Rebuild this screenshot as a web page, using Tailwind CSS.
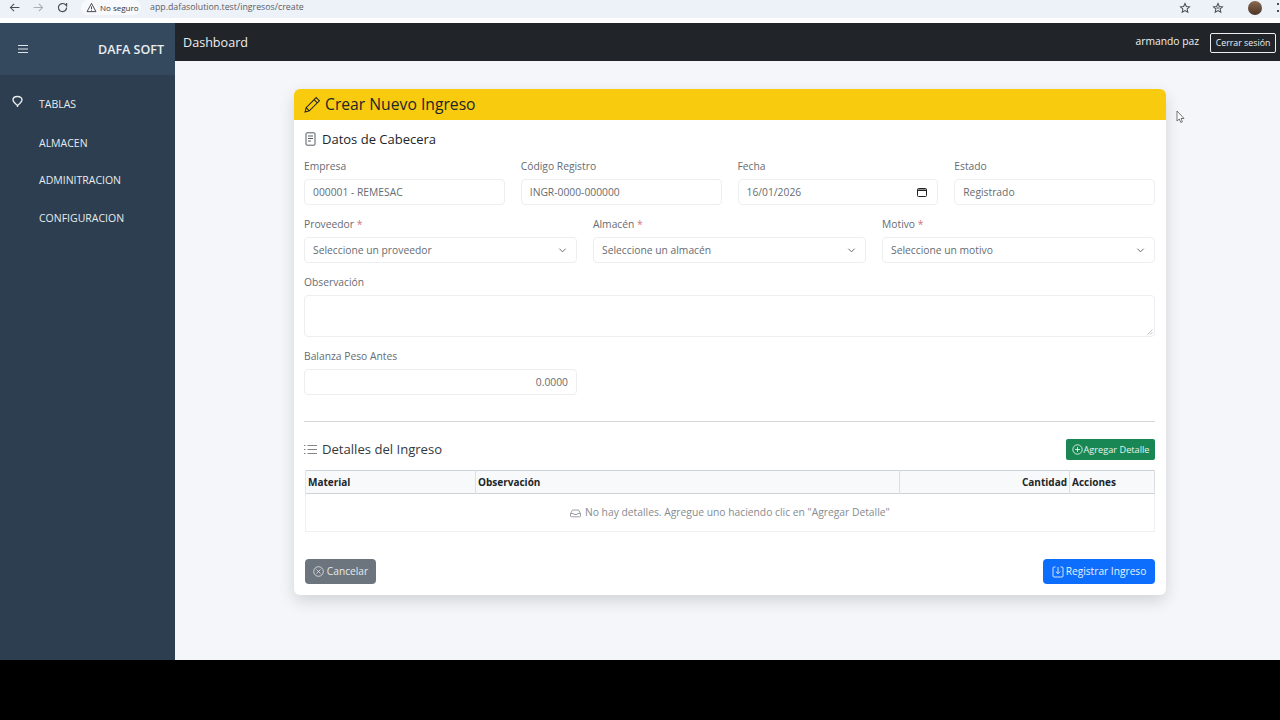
<!DOCTYPE html>
<html lang="es">
<head>
<meta charset="UTF-8">
<title>Crear Nuevo Ingreso</title>
<script src="https://cdn.jsdelivr.net/npm/@tailwindcss/browser@4"></script>
</head>
<body class="w-[1280px] h-[720px] overflow-hidden bg-black font-['Open_Sans','Noto_Sans',sans-serif]">

<!-- Browser bar -->
<div class="h-[23px] bg-white flex">
  <div class="flex-1 h-[18px] bg-[#edf1f8] flex items-center pl-[8px] pb-[3px]">
    <svg class="w-[13px] h-[13px] text-[#4a4d52]" viewBox="0 0 16 16" fill="none" stroke="currentColor" stroke-width="1.3"><path d="M14 8H3M7.5 3.5 3 8l4.500 4.500"/></svg>
    <svg class="w-[13px] h-[13px] ml-[11px] text-[#a9acb1]" viewBox="0 0 16 16" fill="none" stroke="currentColor" stroke-width="1.3"><path d="M2 8h11M8.500 3.500 13 8l-4.500 4.500"/></svg>
    <svg class="w-[13px] h-[13px] ml-[11px] text-[#4a4d52]" viewBox="0 0 16 16" fill="none" stroke="currentColor" stroke-width="1.5"><path d="M13 8a5 5 0 1 1-1.500-3.500L13 6V2.500"/></svg>
    <div class="ml-[12px] h-[15px] w-[60px] shrink-0 rounded-full bg-[#f7f9fd] flex items-center pl-[5px] text-[8px] text-[#33363a] whitespace-nowrap">
      <svg class="w-[11px] h-[11px] mr-[3px] shrink-0" viewBox="0 0 16 16" fill="none" stroke="currentColor" stroke-width="1.3"><path d="M8 2 1.500 14h13zM8 6.500v4M8 11.500v1"/></svg>No seguro
    </div>
    <span class="ml-[9px] text-[8.800px] text-[#5b5f65] whitespace-nowrap">app.dafasolution.test/ingresos/create</span>
    <div class="ml-auto flex items-center">
      <svg class="w-[12px] h-[12px] text-[#4a4d52]" viewBox="0 0 16 16" fill="none" stroke="currentColor" stroke-width="1.4"><path d="m8 2 1.800 3.900 4.200.5-3.100 2.900.8 4.200L8 11.400l-3.700 2.100.8-4.200L2 6.400l4.200-.5z"/></svg>
      <span class="w-[21px]"></span>
      <svg class="w-[12px] h-[12px] text-[#4a4d52]" viewBox="0 0 16 16" fill="none" stroke="currentColor" stroke-width="1.4"><path d="m8 2 1.800 3.900 4.200.5-3.100 2.900.8 4.200L8 11.400l-3.700 2.100.8-4.200L2 6.400l4.200-.5z"/><path d="M6 8h4"/></svg>
      <span class="w-[24px]"></span>
      <span class="w-[14px] h-[14px] rounded-full bg-gradient-to-b from-[#8a6a50] to-[#4c3426]"></span>
      <span class="w-[15px]"></span>
      <span class="w-[2px] h-[9px] border-y-2 border-[#4a4d52] mr-[1px]"></span>
    </div>
  </div>
</div>

<div class="h-[637px] flex">
  <!-- Sidebar -->
  <aside class="w-[175px] shrink-0 bg-[#2c3e50] text-white">
    <div class="h-[52px] bg-[#34495e] flex items-center justify-between pl-[18px] pr-[11px]">
      <svg class="w-[10px] h-[10px] text-[#dfe4e8]" viewBox="0 0 10 10" fill="none" stroke="currentColor" stroke-width="1.200"><path d="M0 1.500h10M0 5h10M0 8.500h10"/></svg>
      <span class="text-[12.500px] font-semibold text-[#e9edf0] leading-none mt-[3px]">DAFA SOFT</span>
    </div>
    <nav class="text-[10.500px] text-[#e8ecef]">
      <div class="h-[20px] mt-[19px] pt-[1px] flex items-center pl-[11px]">
        <svg class="w-[13px] h-[15px] mr-[15px] -mt-[4px]" viewBox="0 0 13 15" fill="none" stroke="currentColor" stroke-width="1.400"><path d="M6.500 10.500C4 8.500 2 7 2 4.800 2 3 3.500 1.500 6.500 1.500S11 3 11 4.800c0 2.200-2 3.700-4.500 5.700zM6.500 10.500V12"/></svg>
        <span>TABLAS</span>
      </div>
      <div class="h-[20px] mt-[19px] pt-[1px] flex items-center pl-[39px]">ALMACEN</div>
      <div class="h-[20px] mt-[17.500px] pt-[1px] flex items-center pl-[39px]">ADMINITRACION</div>
      <div class="h-[20px] mt-[17.500px] pt-[1px] flex items-center pl-[39px]">CONFIGURACION</div>
    </nav>
  </aside>

  <!-- Main -->
  <div class="flex-1 bg-[#f4f6f9] flex flex-col min-w-0">
    <header class="h-[38px] bg-[#212529] flex items-center pl-[8px] pr-[4px] text-white">
      <span class="text-[12.600px] text-[#eceef0] mt-[2px]">Dashboard</span>
      <span class="ml-auto text-[10.300px] text-[#f0f1f2]">armando paz</span>
      <span class="ml-[11px] h-[20px] w-[66px] mt-[2px] pt-[1px] border border-[#eceef0] rounded-[2px] flex items-center justify-center text-[8.800px] text-[#eceef0]">Cerrar sesión</span>
    </header>

    <div class="relative flex-1 pt-[28px] pl-[119px]">
      <svg class="absolute left-[1001px] top-[49px] w-[9px] h-[14px]" viewBox="0 0 9 14" fill="#fff" stroke="#555" stroke-width="0.800"><path d="M1 1v10l2.300-2 1.500 3.500 1.600-.7L5 8.500h3z"/></svg>
      <!-- Card -->
      <section class="w-[872px] h-[506px] bg-white rounded-[6px] shadow-[0_6px_16px_rgba(0,0,0,0.14)] overflow-hidden">
        <div class="h-[31px] bg-[#f8cb0e] flex items-center pl-[10px] text-[#212529]">
          <svg class="w-[17px] h-[17px] mr-[4px]" viewBox="0 0 16 16" fill="none" stroke="currentColor" stroke-width="1"><path d="M11.500 1.500 14.500 4.500 5 14l-4 1 1-4zM9.500 3.500l3 3M2 11l3 3"/></svg>
          <h1 class="text-[15.700px] font-medium leading-none">Crear Nuevo Ingreso</h1>
        </div>

        <div class="pl-[10px] pr-[11px]">
          <div class="h-[38px] flex items-center text-[#212529]">
            <svg class="w-[13px] h-[14px] mr-[5px] -mt-[1px] text-[#444a50]" viewBox="0 0 13 14" fill="none" stroke="currentColor" stroke-width="0.900"><rect x="2" y="0.800" width="9" height="12.400" rx="1"/><path d="M4 4h5M4 6.500h5M4 9h3"/></svg>
            <h2 class="text-[13px] font-medium leading-none">Datos de Cabecera</h2>
          </div>

          <!-- Row 1 -->
          <div class="grid grid-cols-4 gap-x-[16px] text-[10.300px] text-[#666c72]">
            <div>
              <label class="block h-[21px] leading-[16px]">Empresa</label>
              <div class="h-[26px] border border-[#eceef0] rounded-[4px] flex items-center pl-[8px] pt-[1px]">000001 - REMESAC</div>
            </div>
            <div>
              <label class="block h-[21px] leading-[16px]">Código Registro</label>
              <div class="h-[26px] border border-[#eceef0] rounded-[4px] flex items-center pl-[8px] pt-[1px]">INGR-0000-000000</div>
            </div>
            <div>
              <label class="block h-[21px] leading-[16px]">Fecha</label>
              <div class="h-[26px] border border-[#eceef0] rounded-[4px] flex items-center justify-between pl-[8px] pr-[10px] pt-[1px]">
                16/01/2026
                <svg class="w-[10px] h-[10px] -mt-[1px] text-[#222]" viewBox="0 0 10 10" fill="none" stroke="currentColor" stroke-width="1"><rect x="0.500" y="1.500" width="9" height="8" rx="1"/><path d="M0.500 3.300h9" stroke-width="1.500"/></svg>
              </div>
            </div>
            <div>
              <label class="block h-[21px] leading-[16px]">Estado</label>
              <div class="h-[26px] border border-[#eceef0] rounded-[4px] flex items-center pl-[8px] pt-[1px]">Registrado</div>
            </div>
          </div>

          <!-- Row 2 -->
          <div class="grid grid-cols-3 gap-x-[16px] mt-[11px] text-[10.300px] text-[#666c72]">
            <div>
              <label class="block h-[21px] leading-[16px]">Proveedor <span class="text-[#d0757c]">*</span></label>
              <div class="h-[26px] border border-[#eceef0] rounded-[4px] flex items-center justify-between pl-[8px] pr-[9px] pt-[1px]">Seleccione un proveedor<svg class="w-[9px] h-[9px] -mt-[1px]" viewBox="0 0 10 10" fill="none" stroke="#666" stroke-width="1.100"><path d="m1.500 3 3.500 3.500L8.500 3"/></svg></div>
            </div>
            <div>
              <label class="block h-[21px] leading-[16px]">Almacén <span class="text-[#d0757c]">*</span></label>
              <div class="h-[26px] border border-[#eceef0] rounded-[4px] flex items-center justify-between pl-[8px] pr-[9px] pt-[1px]">Seleccione un almacén<svg class="w-[9px] h-[9px] -mt-[1px]" viewBox="0 0 10 10" fill="none" stroke="#666" stroke-width="1.100"><path d="m1.500 3 3.500 3.500L8.500 3"/></svg></div>
            </div>
            <div>
              <label class="block h-[21px] leading-[16px]">Motivo <span class="text-[#d0757c]">*</span></label>
              <div class="h-[26px] border border-[#eceef0] rounded-[4px] flex items-center justify-between pl-[8px] pr-[9px] pt-[1px]">Seleccione un motivo<svg class="w-[9px] h-[9px] -mt-[1px]" viewBox="0 0 10 10" fill="none" stroke="#666" stroke-width="1.100"><path d="m1.500 3 3.500 3.500L8.500 3"/></svg></div>
            </div>
          </div>

          <!-- Observacion -->
          <div class="mt-[11px] text-[10.300px] text-[#666c72]">
            <label class="block h-[21px] leading-[16px]">Observación</label>
            <div class="relative h-[42px] border border-[#eceef0] rounded-[4px]">
              <svg class="absolute right-[1px] bottom-[1px] w-[6px] h-[6px]" viewBox="0 0 6 6" stroke="#aaa" stroke-width="0.700"><path d="M0.500 5.500 5.500 0.500M3 5.500 5.500 3"/></svg>
            </div>
          </div>

          <!-- Balanza -->
          <div class="mt-[11px] w-[273px] text-[10.300px] text-[#666c72]">
            <label class="block h-[21px] leading-[16px]">Balanza Peso Antes</label>
            <div class="h-[26px] border border-[#eceef0] rounded-[4px] flex items-center justify-end pr-[8px] pt-[1px]">0.0000</div>
          </div>

          <hr class="mt-[26px] border-[#d5d8db]">

          <!-- Detalles -->
          <div class="h-[21px] mt-[17px] flex items-center justify-between text-[#33383d]">
            <div class="flex items-center">
              <svg class="w-[13px] h-[11px] mr-[5px]" viewBox="0 0 13 11" fill="none" stroke="#666" stroke-width="0.800"><path d="M3.500 1.500H13M3.500 5.500H13M3.500 9.500H13M0 1.500h1.500M0 5.500h1.500M0 9.500h1.500"/></svg>
              <h2 class="text-[13.100px] leading-none">Detalles del Ingreso</h2>
            </div>
            <button class="w-[89px] h-[21px] bg-[#198754] rounded-[2px] flex items-center justify-center text-[9.200px] text-[#e6f3ec]">
              <svg class="w-[11px] h-[11px] mr-[1px]" viewBox="0 0 11 11" fill="none" stroke="currentColor" stroke-width="0.900"><circle cx="5.500" cy="5.500" r="4.700"/><path d="M5.500 3v5M3 5.500h5"/></svg>Agregar Detalle
            </button>
          </div>

          <!-- Table -->
          <table class="mt-[10px] ml-px w-[850px] table-fixed border-collapse text-[10px]">
            <thead>
              <tr class="h-[23px] bg-[#f8f9fa] text-left text-[#212529] border-y border-[#cfd2d5]">
                <th class="w-[170px] pl-[2px] font-bold border-l border-[#e4e6e8]">Material</th>
                <th class="w-[424px] pl-[2px] font-bold border-l border-[#dde0e3]">Observación</th>
                <th class="w-[170px] pr-[2px] text-right font-bold border-l border-[#dde0e3]">Cantidad</th>
                <th class="pl-[2px] font-bold border-x border-[#dde0e3]">Acciones</th>
              </tr>
            </thead>
            <tbody>
              <tr class="h-[38px] border-b border-x border-[#eef0f1]">
                <td colspan="4" class="text-center text-[10.300px] text-[#868b90]">
                  <svg class="inline w-[11px] h-[10px] -mt-[1px] mr-[1px]" viewBox="0 0 11 10" fill="none" stroke="currentColor" stroke-width="0.800"><path d="M0.500 5.500 2.500 2h6l2 3.500V8a.8.800 0 0 1-.8.800H1.300A.8.800 0 0 1 .5 8zM0.500 5.500h3l.5 1h3l.5-1h3"/></svg>
                  No hay detalles. Agregue uno haciendo clic en "Agregar Detalle"
                </td>
              </tr>
            </tbody>
          </table>

          <!-- Actions -->
          <div class="mt-[27px] flex items-center justify-between">
            <button class="w-[71px] h-[25px] ml-px bg-[#6c757d] rounded-[4px] flex items-center justify-center text-[10.200px] text-[#e8eaec]">
              <svg class="w-[11px] h-[11px] mr-[3px]" viewBox="0 0 11 11" fill="none" stroke="currentColor" stroke-width="0.800"><circle cx="5.500" cy="5.500" r="4.800"/><path d="m3.500 3.500 4 4m0-4-4 4"/></svg>Cancelar
            </button>
            <button class="w-[112px] h-[25px] bg-[#0d6efd] rounded-[4px] flex items-center justify-center text-[10.200px] text-[#e8f1ff]">
              <svg class="w-[12px] h-[12px] mr-[2px]" viewBox="0 0 12 12" fill="none" stroke="currentColor" stroke-width="0.900"><path d="M3.500 1H2a1 1 0 0 0-1 1v8a1 1 0 0 0 1 1h8a1 1 0 0 0 1-1V2a1 1 0 0 0-1-1H8.500M6 1v6.500M3.800 5.500 6 7.700l2.200-2.200"/></svg>Registrar Ingreso
            </button>
          </div>
        </div>
      </section>
    </div>
  </div>
</div>
</body>
</html>
